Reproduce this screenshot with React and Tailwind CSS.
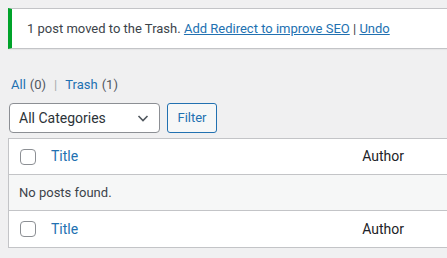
export default function App() {
  return (
    <div className="w-[447px] h-[258px] overflow-hidden bg-[#f0f0f1] text-[13px] text-[#3c434a]" style={{ fontFamily: 'Roboto, "Liberation Sans", sans-serif' }}>
      {/* notice */}
      <div className="ml-2 mt-2 h-[41px] flex items-center bg-white border-y border-[#c3c4c7] border-l-4 border-l-[#00a32a] pl-[15px] shadow-[0_1px_1px_rgba(0,0,0,0.04)]">
        <p>
          1 post moved to the Trash.{' '}
          <a href="#" className="text-[#2271b1] underline">Add Redirect to improve SEO</a>
          {' | '}
          <a href="#" className="text-[#2271b1] underline">Undo</a>
        </p>
      </div>

      {/* views */}
      <div className="mt-[27px] ml-[11px] flex items-center h-[17px]">
        <a href="#" className="text-[#2271b1]">All</a>
        <span className="ml-1 text-[#50575e]">(0)</span>
        <span className="mx-2 text-[#a7aaad]">|</span>
        <a href="#" className="text-[#2271b1]">Trash</a>
        <span className="ml-1 text-[#50575e]">(1)</span>
      </div>

      {/* filters */}
      <div className="mt-[10px] ml-[9px] flex items-center gap-[7px]">
        <div className="w-[151px] h-[30px] flex items-center justify-between border border-[#8c8f94] rounded-[4px] bg-white pl-[9px] pr-[8px] text-[14px] text-[#2c3338]">
          <span>All Categories</span>
          <svg width="16" height="16" viewBox="0 0 16 16" fill="none" stroke="#50575e" strokeWidth="1.6">
            <path d="M3.5 6 L8 10.5 L12.5 6" />
          </svg>
        </div>
        <button className="w-[50px] h-[30px] border border-[#2271b1] rounded-[3px] bg-[#f6f7f7] text-[#2271b1] text-[13px]">
          Filter
        </button>
      </div>

      {/* table */}
      <div className="mt-[5px] ml-2 bg-white border border-[#c3c4c7] border-r-0">
        <div className="h-[36px] flex items-center border-b border-[#c3c4c7] text-[14px]">
          <span className="ml-[11px] w-4 h-4 rounded-[4px] border border-[#8c8f94] bg-white" />
          <a href="#" className="ml-[15px] text-[#2271b1]">Title</a>
          <span className="ml-auto mr-[43px] text-[#1d2327]">Author</span>
        </div>
        <div className="h-[36px] flex items-center border-b border-[#c3c4c7] bg-[#f6f7f7] pl-[10px]">
          No posts found.
        </div>
        <div className="h-[36px] flex items-center text-[14px]">
          <span className="ml-[11px] w-4 h-4 rounded-[4px] border border-[#8c8f94] bg-white" />
          <a href="#" className="ml-[15px] text-[#2271b1]">Title</a>
          <span className="ml-auto mr-[43px] text-[#1d2327]">Author</span>
        </div>
      </div>
    </div>
  );
}
